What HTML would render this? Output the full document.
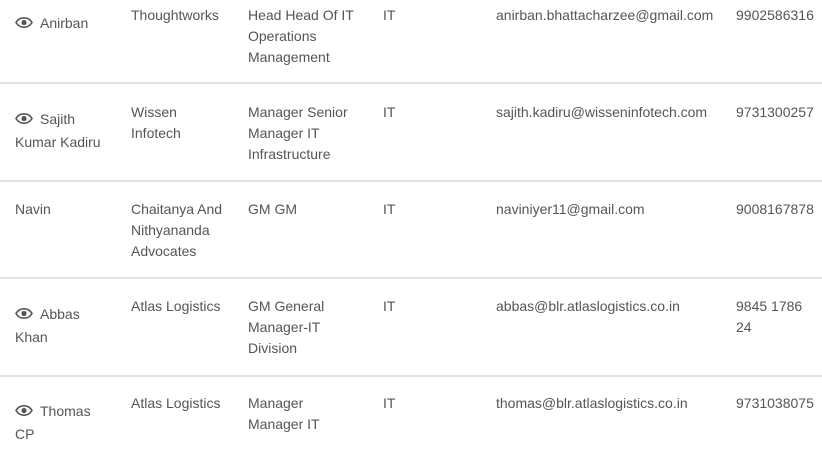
<!DOCTYPE html>
<html><head><meta charset="utf-8"><style>
html,body{margin:0;width:822px;height:450px;overflow:hidden;background:#fff;}
body{font-family:"Segoe UI","Liberation Sans",sans-serif;font-size:14px;color:#555;position:relative;}
.row{position:absolute;left:0;width:822px;border-bottom:2px solid #e2e2e2;}
.c{position:absolute;line-height:21px;}
.n{left:15px;width:98px;line-height:22.5px;}
.eye{display:inline-block;width:18px;height:11px;margin-right:7px;vertical-align:0px;}
</style></head><body>
<svg width="0" height="0" style="position:absolute"><defs><symbol id="e" viewBox="0 0 18 11"><path d="M1 5.5C3 2 6 .8 9 .8s6 1.2 8 4.7c-2 3.5-5 4.7-8 4.7S3 9 1 5.5z" fill="none" stroke="#555" stroke-width="1.6"/><circle cx="9" cy="5.5" r="2.6" fill="#555"/></symbol></defs></svg>

<div class="row" style="top:-12px;height:94px">
<div class="c n" style="top:24px"><svg class="eye"><use href="#e"/></svg>Anirban</div>
<div class="c" style="left:131px;top:17px">Thoughtworks</div>
<div class="c" style="left:248px;top:17px;width:120px">Head Head Of IT Operations Management</div>
<div class="c" style="left:383px;top:17px">IT</div>
<div class="c" style="left:496px;top:17px">anirban.bhattacharzee@gmail.com</div>
<div class="c" style="left:736px;top:17px">9902586316</div>
</div>

<div class="row" style="top:84px;height:96px">
<div class="c n" style="top:24px"><svg class="eye"><use href="#e"/></svg>Sajith Kumar Kadiru</div>
<div class="c" style="left:131px;top:18px;width:90px">Wissen Infotech</div>
<div class="c" style="left:248px;top:18px;width:120px">Manager Senior Manager IT Infrastructure</div>
<div class="c" style="left:383px;top:18px">IT</div>
<div class="c" style="left:496px;top:18px">sajith.kadiru@wisseninfotech.com</div>
<div class="c" style="left:736px;top:18px">9731300257</div>
</div>

<div class="row" style="top:182px;height:95px">
<div class="c" style="left:15px;top:17px">Navin</div>
<div class="c" style="left:131px;top:17px;width:105px">Chaitanya And Nithyananda Advocates</div>
<div class="c" style="left:248px;top:17px">GM GM</div>
<div class="c" style="left:383px;top:17px">IT</div>
<div class="c" style="left:496px;top:17px">naviniyer11@gmail.com</div>
<div class="c" style="left:736px;top:17px">9008167878</div>
</div>

<div class="row" style="top:279px;height:96px">
<div class="c n" style="top:24px"><svg class="eye"><use href="#e"/></svg>Abbas Khan</div>
<div class="c" style="left:131px;top:17px">Atlas Logistics</div>
<div class="c" style="left:248px;top:17px;width:110px">GM General Manager-IT Division</div>
<div class="c" style="left:383px;top:17px">IT</div>
<div class="c" style="left:496px;top:17px">abbas@blr.atlaslogistics.co.in</div>
<div class="c" style="left:736px;top:17px;width:75px">9845 1786 24</div>
</div>

<div class="row" style="top:377px;height:73px;border:none">
<div class="c n" style="top:23px"><svg class="eye"><use href="#e"/></svg>Thomas CP</div>
<div class="c" style="left:131px;top:16px">Atlas Logistics</div>
<div class="c" style="left:248px;top:16px;width:100px">Manager Manager IT</div>
<div class="c" style="left:383px;top:16px">IT</div>
<div class="c" style="left:496px;top:16px">thomas@blr.atlaslogistics.co.in</div>
<div class="c" style="left:736px;top:16px">9731038075</div>
</div>
</body></html>
